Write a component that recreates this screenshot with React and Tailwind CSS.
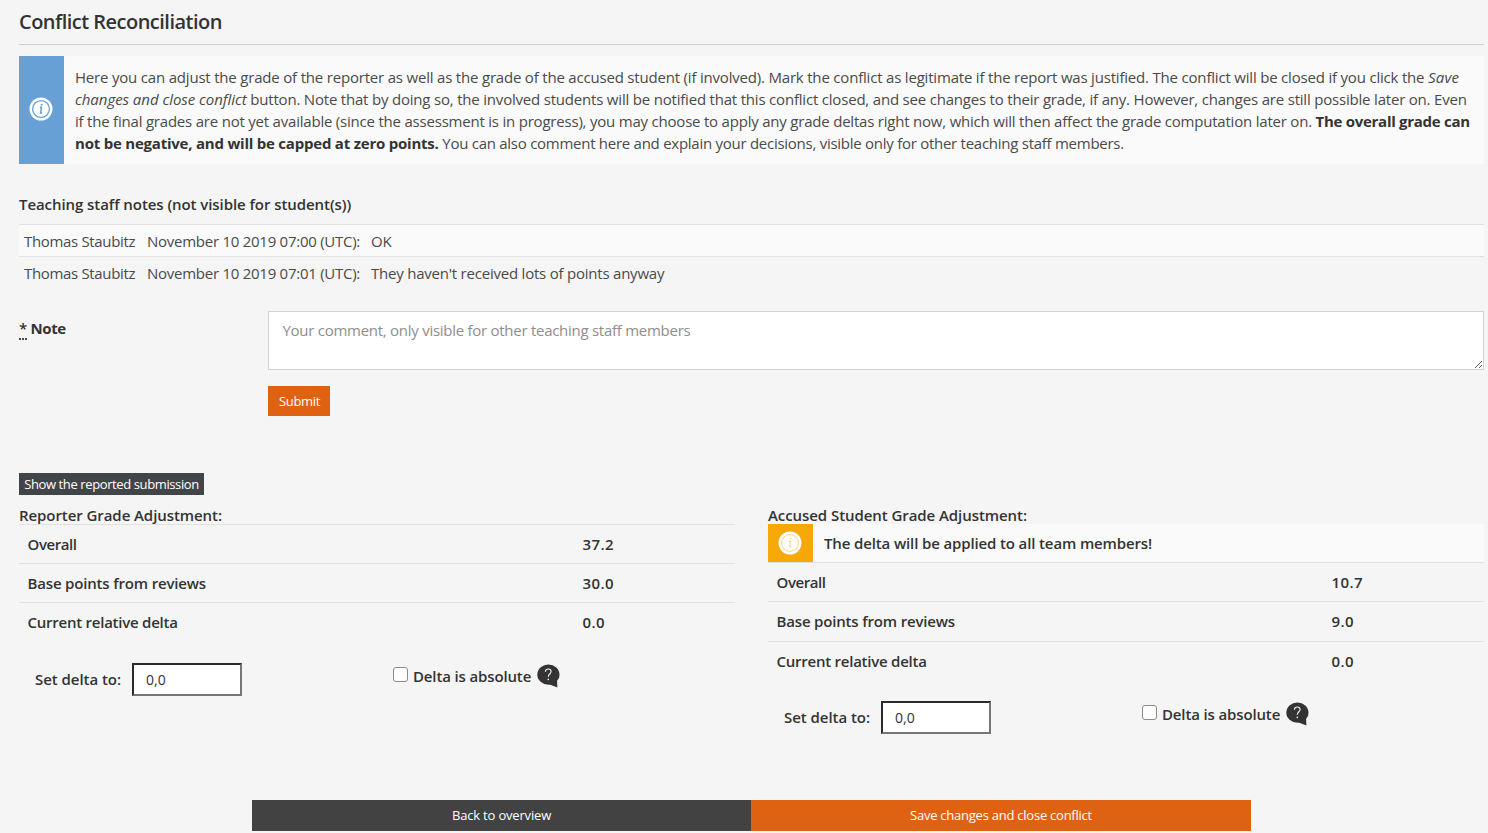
function InfoIcon({ fg, thin }) {
  return (
    <svg viewBox="0 0 24 24" className="mr-0.5 mb-0.5 size-6 shrink-0" fill="none">
      <circle cx="12" cy="12" r="11.5" fill="#fff" />
      <circle cx="12" cy="12" r="8.4" stroke={fg} strokeWidth={thin ? 0.8 : 1.3} />
      <path d="M10.8 10.3h1.6l-.7 5.7h1.4" stroke={fg} strokeWidth={thin ? 0.9 : 1.5} />
      <circle cx="12.6" cy="7.8" r={thin ? 0.7 : 1} fill={fg} />
    </svg>
  );
}

function HelpIcon() {
  return (
    <svg viewBox="0 0 23 24" className="mt-px -ml-px h-6 w-[23px] shrink-0" fill="none">
      <ellipse cx="11.4" cy="10.6" rx="11.1" ry="10.1" fill="#333" />
      <path d="M12 20.3 L20.4 23.6 L20 15.5 Z" fill="#333" />
      <path
        d="M8.4 7.8 C8.5 6 9.7 5 11.3 5 C13 5 14.1 6 14.1 7.5 C14.1 9.8 11.3 9.8 11.3 12.8"
        stroke="#f5f5f5"
        strokeWidth="1.1"
      />
      <circle cx="11.3" cy="15.4" r=".8" fill="#f5f5f5" />
    </svg>
  );
}

function Row({ label, value, spacing, height }) {
  return (
    <div className={`flex items-center border-t border-[#e1e1e1] pl-[8.5px] ${height}`}>
      <span className={`w-[555px] ${spacing}`}>{label}</span>
      <span className="tracking-[0.45px]">{value}</span>
    </div>
  );
}

function DeltaForm() {
  return (
    <div className="flex h-[33px] items-start pl-4">
      <label className="w-[97px] pt-[6px] leading-5 tracking-[-0.05px]">Set delta to:</label>
      <input
        type="text"
        defaultValue="0,0"
        className="h-[33px] w-[110px] border-2 border-t-[#2b2b2b] border-r-[#767676] border-b-[#767676] border-l-[#2b2b2b] bg-white pl-3 text-sm font-normal text-[#333] outline-none"
      />
      <label className="ml-[151px] flex items-start">
        <input
          type="checkbox"
          className="mt-1 size-[15px] appearance-none rounded-[3px] border border-[#8a8a8a] bg-white"
        />
        <span className="ml-[5px] w-[125px] pt-[3px] leading-5 tracking-[-0.14px]">Delta is absolute</span>
      </label>
      <HelpIcon />
    </div>
  );
}

function Note({ time, text, shade }) {
  return (
    <div className={`flex items-center border-t border-[#e1e1e1] pl-[5px] ${shade}`}>
      <span className="w-[123px] tracking-[-0.33px]">Thomas Staubitz</span>
      <span className="w-[224px] tracking-[-0.26px]">{time}</span>
      <span className="tracking-[-0.22px]">{text}</span>
    </div>
  );
}

export default function App() {
  return (
    <div className="flex h-[833px] w-[1488px] flex-col overflow-hidden bg-[#f5f5f5] pr-1 pl-[19px] font-['Open_Sans','Noto_Sans',sans-serif] text-[15px] text-[#4a4a48]">
      <h1 className="flex h-[45px] shrink-0 items-center border-b border-[#cfcfcf] text-xl font-semibold tracking-[-0.52px] text-[#333]">
        Conflict Reconciliation
      </h1>

      <div className="mt-[11px] flex h-[108px] shrink-0 bg-[#fafafa]">
        <div className="flex w-[45px] shrink-0 items-center justify-center bg-[#66a0d4]">
          <InfoIcon fg="#66a0d4" />
        </div>
        <div className="pt-[10px] pl-[11px] leading-[22px] whitespace-nowrap">
          <div className="tracking-[-0.193px]">
            Here you can adjust the grade of the reporter as well as the grade of the accused student (if involved). Mark the conflict as legitimate if the report was justified. The conflict will be closed if you click the <em className="tracking-[0.2px]">Save</em>
          </div>
          <div className="tracking-[-0.197px]">
            <em className="tracking-[-0.04px]">changes and close conflict</em> button. Note that by doing so, the involved students will be notified that this conflict closed, and see changes to their grade, if any. However, changes are still possible later on. Even
          </div>
          <div className="tracking-[-0.21px]">
            if the final grades are not yet available (since the assessment is in progress), you may choose to apply any grade deltas right now, which will then affect the grade computation later on. <strong className="tracking-[-0.28px] text-[#333]">The overall grade can</strong>
          </div>
          <div className="tracking-[-0.265px]">
            <strong className="tracking-[-0.22px] text-[#333]">not be negative, and will be capped at zero points.</strong> You can also comment here and explain your decisions, visible only for other teaching staff members.
          </div>
        </div>
      </div>

      <h2 className="mt-[30px] h-[30px] shrink-0 leading-[21px] font-semibold tracking-[-0.07px] text-[#333]">
        Teaching staff notes (not visible for student(s))
      </h2>
      <Note time="November 10 2019 07:00 (UTC):" text="OK" shade="h-8 shrink-0 bg-[#fafafa] pt-0.5" />
      <Note time="November 10 2019 07:01 (UTC):" text="They haven't received lots of points anyway" shade="h-[33px] shrink-0" />

      <div className="mt-[22px] flex shrink-0">
        <label className="w-[249px] pt-[7px] leading-5 font-bold tracking-[-0.35px] text-[#333]">
          <abbr className="border-b-2 border-dotted border-[#4a4a48] font-semibold no-underline">*</abbr> Note
        </label>
        <textarea
          placeholder="Your comment, only visible for other teaching staff members"
          className="h-[59px] w-[1216px] resize border border-[#d4d4d4] bg-white px-[13.5px] pt-2 leading-5 tracking-[-0.27px] placeholder:text-[#8e8e8e]"
        />
      </div>
      <button className="mt-4 ml-[249px] h-[30px] w-[62px] shrink-0 bg-[#de6212] pt-px pl-px text-[13px] tracking-[-0.33px] text-white">
        Submit
      </button>

      <button className="mt-[57px] h-[22px] w-[185px] shrink-0 bg-[#424548] pt-px text-[13px] tracking-[-0.39px] whitespace-nowrap text-white">
        Show the reported submission
      </button>

      <div className="mt-[10px] grid h-[295px] shrink-0 grid-cols-[716px_716px] gap-[33px] font-semibold text-[#333]">
        <section>
          <h3 className="h-[19px] leading-[21px] tracking-[-0.07px]">Reporter Grade Adjustment:</h3>
          <Row label="Overall" value="37.2" spacing="tracking-[-0.43px]" height="h-[39px]" />
          <Row label="Base points from reviews" value="30.0" spacing="tracking-[-0.17px]" height="h-[39px]" />
          <Row label="Current relative delta" value="0.0" spacing="tracking-[-0.24px]" height="h-[39px]" />
          <div className="mt-[22px]">
            <DeltaForm />
          </div>
        </section>
        <section>
          <h3 className="h-[19px] leading-[21px] tracking-[-0.07px]">Accused Student Grade Adjustment:</h3>
          <div className="flex h-[38px] bg-[#fafafa]">
            <div className="flex w-[45px] items-center justify-center bg-[#f6a806] pt-0.5">
              <InfoIcon fg="#f8c566" thin />
            </div>
            <span className="self-center pl-[11px] tracking-[-0.13px]">The delta will be applied to all team members!</span>
          </div>
          <Row label="Overall" value="10.7" spacing="tracking-[-0.43px]" height="h-[39px]" />
          <Row label="Base points from reviews" value="9.0" spacing="tracking-[-0.17px]" height="h-10" />
          <Row label="Current relative delta" value="0.0" spacing="tracking-[-0.24px]" height="h-[39px]" />
          <div className="mt-[21px]">
            <DeltaForm />
          </div>
        </section>
      </div>

      <div className="ml-[233px] flex h-[31px] shrink-0 text-[13px] text-white">
        <button className="w-[499px] bg-[#424242] tracking-[-0.18px]">Back to overview</button>
        <button className="w-[500px] bg-[#de6212] tracking-[-0.24px]">Save changes and close conflict</button>
      </div>
    </div>
  );
}
